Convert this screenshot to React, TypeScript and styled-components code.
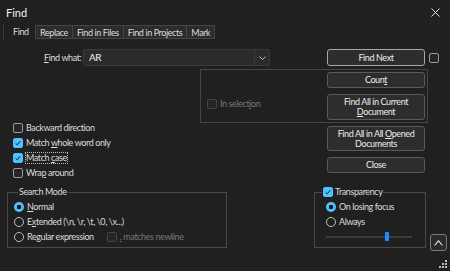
import styled, { createGlobalStyle, css } from 'styled-components'

const Global = createGlobalStyle`
  html, body {
    margin: 0;
    padding: 0;
    background: #202020;
  }
  body {
    width: 450px;
    height: 271px;
    overflow: hidden;
    font-family: Lato, 'Noto Sans', sans-serif;
    font-size: 9px;
    letter-spacing: -0.4px;
    color: #dcdcdc;
  }
`

const tabs = ['Find', 'Replace', 'Find in Files', 'Find in Projects', 'Mark']

const CheckMark = () => (
  <svg width="8" height="8" viewBox="0 0 8 8">
    <path d="M1.6 4.3 L3.2 5.8 L6.4 2.2" fill="none" stroke="#1b1b1b" strokeWidth="1" />
  </svg>
)

function CheckItem({ checked, disabled, focus, children }: { checked?: boolean; disabled?: boolean; focus?: boolean; children: React.ReactNode }) {
  return (
    <Item $disabled={disabled}>
      <Box $checked={checked} $disabled={disabled}>{checked && <CheckMark />}</Box>
      <ItemText $focus={focus}>{children}</ItemText>
    </Item>
  )
}

function RadioItem({ checked, children }: { checked?: boolean; children: React.ReactNode }) {
  return (
    <Item>
      <Radio $checked={checked} />
      <ItemText>{children}</ItemText>
    </Item>
  )
}

export default function App() {
  return (
    <>
      <Global />
      <Dialog>
        <TitleBar>
          <Title>Find</Title>
          <svg width="9" height="9" viewBox="0 0 9 9">
            <path d="M0.5 0.5 L8.5 8.5 M8.5 0.5 L0.5 8.5" stroke="#e0e0e0" strokeWidth="1" />
          </svg>
        </TitleBar>
        <Tabs>
          {tabs.map((t, i) => (
            <Tab key={t} $active={i === 0}>{t}</Tab>
          ))}
        </Tabs>

        <TopRow>
          <Label><u>F</u>ind what:</Label>
          <Combo>
            <ComboText>AR</ComboText>
            <ComboArrow>
              <svg width="7" height="4" viewBox="0 0 7 4">
                <path d="M0.5 0.5 L3.5 3.5 L6.5 0.5" fill="none" stroke="#bdbdbd" strokeWidth="1" />
              </svg>
            </ComboArrow>
          </Combo>
          <Button $default $h={17} $gapLeft={57}><span>Find Next</span></Button>
          <Box $gapLeft={4} />
        </TopRow>

        <SelectionGroup>
          <SelectionCheck>
            <CheckItem disabled>In select<u>i</u>on</CheckItem>
          </SelectionCheck>
          <ButtonCol>
            <Button $h={16}><span>Coun<u>t</u></span></Button>
            <Button $h={26}><span>Find All in Current<br /><u>D</u>ocument</span></Button>
          </ButtonCol>
        </SelectionGroup>

        <MidRow>
          <CheckCol>
            <CheckItem>Backward direction</CheckItem>
            <CheckItem checked>Match <u>w</u>hole word only</CheckItem>
            <CheckItem checked focus>Match <u>c</u>ase</CheckItem>
            <CheckItem>Wra<u>p</u> around</CheckItem>
          </CheckCol>
          <ButtonCol $top={3}>
            <Button $h={25}><span>Find All in All <u>O</u>pened<br />Documents</span></Button>
            <Button $h={16}><span>Close</span></Button>
          </ButtonCol>
        </MidRow>

        <BottomRow>
          <Group $left={7} $width={220} $pad={6}>
            <Legend>Search Mode</Legend>
            <RadioItem checked><u>N</u>ormal</RadioItem>
            <RadioItem>E<u>x</u>tended (\n, \r, \t, \0, \x...)</RadioItem>
            <Item>
              <Radio />
              <ItemText>Regular expression</ItemText>
              <Box $disabled $gapLeft={10} />
              <DisabledText><u>.</u> matches newline</DisabledText>
            </Item>
          </Group>
          <Group $left={87} $width={112} $pad={11}>
            <Legend $shift={-4}>
              <Box $checked><CheckMark /></Box>
              <span>Transparency</span>
            </Legend>
            <RadioItem checked>On losing focus</RadioItem>
            <RadioItem>Always</RadioItem>
            <Slider>
              <Track />
              <Thumb />
            </Slider>
          </Group>
          <UpButton>
            <svg width="9" height="6" viewBox="0 0 9 6">
              <path d="M0.5 5.5 L4.5 0.8 L8.5 5.5" fill="none" stroke="#e8e8e8" strokeWidth="1.1" />
            </svg>
          </UpButton>
        </BottomRow>

        <Grip>
          <svg width="8" height="8" viewBox="0 0 8 8" fill="#bdbdbd">
            <rect x="6" y="0" width="2" height="2" />
            <rect x="3" y="3" width="2" height="2" />
            <rect x="6" y="3" width="2" height="2" />
            <rect x="0" y="6" width="2" height="2" />
            <rect x="3" y="6" width="2" height="2" />
            <rect x="6" y="6" width="2" height="2" />
          </svg>
        </Grip>
      </Dialog>
    </>
  )
}

const Dialog = styled.div`
  position: relative;
  width: 450px;
  height: 271px;
  background: #202020;
  box-sizing: border-box;
`

const TitleBar = styled.div`
  display: flex;
  align-items: center;
  justify-content: space-between;
  height: 24px;
  padding: 0 10px 0 6px;
`

const Title = styled.span`
  font-size: 11px;
  letter-spacing: 0;
  color: #f0f0f0;
`

const Tabs = styled.div`
  display: flex;
  height: 15px;
  margin: 0 0 0 3px;
`

const Tab = styled.div<{ $active?: boolean }>`
  display: flex;
  align-items: center;
  margin-right: -1px;
  color: #dcdcdc;
  white-space: nowrap;
  box-sizing: border-box;
  ${({ $active }) =>
    $active
      ? css`
          width: 33px;
          padding-left: 9px;
          border-left: 1px solid #3a3a3a;
          background: #202020;
        `
      : css`
          padding: 0 4px;
          margin-top: 1px;
          height: 14px;
          background: #2c2c2c;
          border: 1px solid #454545;
        `}
`

const TopRow = styled.div`
  display: flex;
  align-items: center;
  height: 17px;
  margin-top: 10px;
  padding-left: 44px;
`

const Label = styled.span`
  flex: none;
  width: 39px;
  white-space: nowrap;
`

const Combo = styled.div`
  display: flex;
  width: 187px;
  height: 17px;
  box-sizing: border-box;
  background: #2b2b2b;
  border: 1px solid #3a3a3a;
  border-radius: 2px;
`

const ComboText = styled.span`
  flex: 1;
  padding-left: 5px;
  font-size: 10px;
  line-height: 15px;
  color: #f2f2f2;
`

const ComboArrow = styled.span`
  display: flex;
  align-items: center;
  justify-content: center;
  width: 14px;
  border-left: 1px solid #3a3a3a;
`

const Button = styled.div<{ $h: number; $default?: boolean; $gapLeft?: number }>`
  display: flex;
  align-items: center;
  justify-content: center;
  flex: none;
  width: 98px;
  height: ${({ $h }) => $h}px;
  margin-left: ${({ $gapLeft }) => $gapLeft ?? 0}px;
  box-sizing: border-box;
  background: #2d2d2d;
  border: 1px solid ${({ $default }) => ($default ? '#a8a8a8' : '#5a5a5a')};
  border-radius: 3px;
  color: #ececec;
  text-align: center;
  line-height: 10px;
  white-space: nowrap;
`

const Box = styled.span<{ $checked?: boolean; $disabled?: boolean; $gapLeft?: number }>`
  display: inline-flex;
  align-items: center;
  justify-content: center;
  flex: none;
  width: 10px;
  height: 10px;
  margin-left: ${({ $gapLeft }) => $gapLeft ?? 0}px;
  box-sizing: border-box;
  border-radius: 2px;
  background: ${({ $checked }) => ($checked ? '#4cc2ff' : '#262626')};
  border: 1px solid
    ${({ $checked, $disabled }) => ($checked ? '#4cc2ff' : $disabled ? '#464646' : '#9a9a9a')};
`

const Radio = styled.span<{ $checked?: boolean }>`
  flex: none;
  width: 10px;
  height: 10px;
  box-sizing: border-box;
  border-radius: 50%;
  ${({ $checked }) =>
    $checked
      ? css`
          background: radial-gradient(circle, #111 0 2px, #4cc2ff 2.5px);
        `
      : css`
          border: 1px solid #bdbdbd;
        `}
`

const Item = styled.div<{ $disabled?: boolean }>`
  display: flex;
  align-items: center;
  height: 10px;
  gap: 3px;
  color: ${({ $disabled }) => ($disabled ? '#777' : '#dcdcdc')};
  white-space: nowrap;
`

const ItemText = styled.span<{ $focus?: boolean }>`
  line-height: 10px;
  ${({ $focus }) =>
    $focus &&
    css`
      outline: 1px dotted #bbb;
      outline-offset: 0;
    `}
`

const DisabledText = styled.span`
  color: #777;
  line-height: 10px;
`

const SelectionGroup = styled.div`
  display: flex;
  justify-content: space-between;
  width: 228px;
  height: 54px;
  margin: 3px 0 0 200px;
  padding: 2px 2px 0 6px;
  box-sizing: border-box;
  border: 1px solid #454545;
`

const SelectionCheck = styled.div`
  margin-top: 27px;
`

const ButtonCol = styled.div<{ $top?: number }>`
  display: flex;
  flex-direction: column;
  gap: 6px;
  padding-top: ${({ $top }) => $top ?? 0}px;
`

const MidRow = styled.div`
  display: grid;
  grid-template-columns: 327px 98px;
`

const CheckCol = styled.div`
  display: flex;
  flex-direction: column;
  gap: 5px;
  padding-left: 13px;
`

const BottomRow = styled.div`
  display: flex;
  align-items: flex-start;
  margin-top: 9px;
`

const Group = styled.fieldset<{ $left: number; $width: number; $pad: number }>`
  display: flex;
  flex-direction: column;
  gap: 5px;
  width: ${({ $width }) => $width}px;
  height: 61px;
  margin: 0 0 0 ${({ $left }) => $left}px;
  padding: 5px 0 0 ${({ $pad }) => $pad}px;
  box-sizing: border-box;
  border: 1px solid #4a4a4a;
  min-width: 0;
`

const Legend = styled.legend<{ $shift?: number }>`
  display: flex;
  align-items: center;
  gap: 2px;
  height: 10px;
  line-height: 10px;
  margin-left: ${({ $shift }) => $shift ?? 4}px;
  padding: 0 1px;
  color: #dcdcdc;
`

const Slider = styled.div`
  display: flex;
  align-items: center;
  position: relative;
  width: 86px;
  height: 10px;
`

const Track = styled.div`
  width: 100%;
  height: 2px;
  background: #3c3c3c;
`

const Thumb = styled.div`
  position: absolute;
  left: 59px;
  top: 0;
  width: 4px;
  height: 9px;
  border-radius: 1px;
  background: #1a8cff;
`

const UpButton = styled.div`
  display: flex;
  align-items: center;
  justify-content: center;
  width: 17px;
  height: 17px;
  margin: 47px 0 0 4px;
  box-sizing: border-box;
  border: 1px solid #7a7a7a;
  border-radius: 3px;
  background: #2a2a2a;
`

const Grip = styled.div`
  position: absolute;
  right: 3px;
  bottom: 3px;
  display: flex;
`
